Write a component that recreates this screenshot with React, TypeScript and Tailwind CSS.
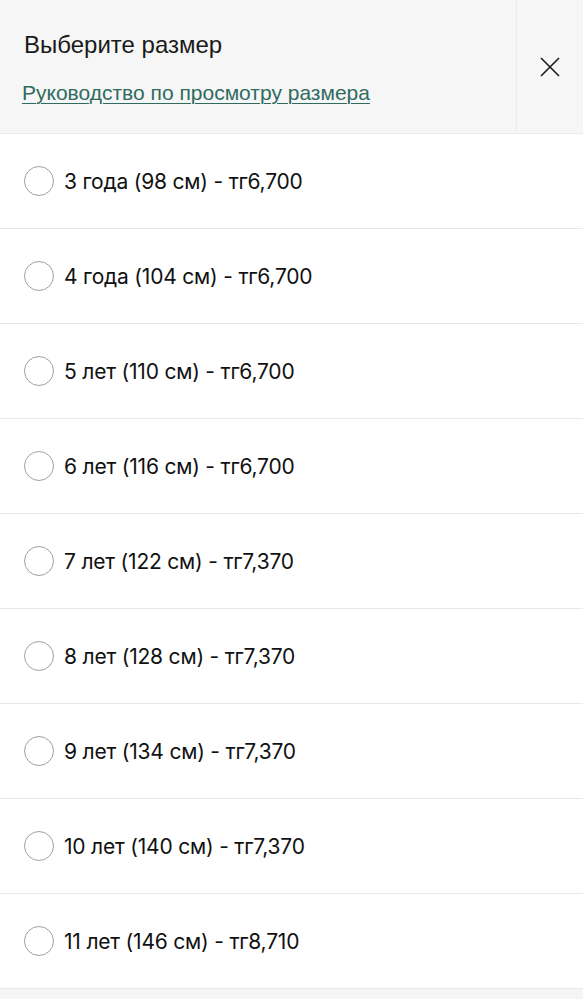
const sizes = [
  '3 года (98 см) - тг6,700',
  '4 года (104 см) - тг6,700',
  '5 лет (110 см) - тг6,700',
  '6 лет (116 см) - тг6,700',
  '7 лет (122 см) - тг7,370',
  '8 лет (128 см) - тг7,370',
  '9 лет (134 см) - тг7,370',
  '10 лет (140 см) - тг7,370',
  '11 лет (146 см) - тг8,710',
]

function SizeRow({ label }: { label: string }) {
  return (
    <label className="flex h-[95px] cursor-pointer items-center gap-[10px] border-b border-[#e8e8e8] pl-6">
      <span className="h-[30px] w-[30px] shrink-0 rounded-full border-[1.5px] border-[#a0a0a0] bg-white" />
      <span className="pt-[1px] text-[21px] tracking-[-0.2px] text-[#111]">{label}</span>
    </label>
  )
}

export default function App() {
  return (
    <div className="min-h-[999px] w-[583px] bg-[#f5f5f5] font-['Inter',sans-serif]">
      <div className="flex h-[134px] border-b border-[#ececec] bg-[#f6f6f6]">
        <div className="flex flex-1 flex-col pl-6 pt-[30px] font-['Liberation_Sans',Arial,sans-serif]">
          <h2 className="text-[24px] leading-[30px] text-[#1a1a1a]">Выберите размер</h2>
          <a
            href="#"
            className="mt-[20px] -ml-[2px] text-[21px] leading-[26px] text-[#2f6b60] underline decoration-1 underline-offset-[3px]">
            Руководство по просмотру размера
          </a>
        </div>
        <button className="flex w-[67px] items-center justify-center border-l border-[#ebebeb]">
          <svg width="22" height="22" viewBox="0 0 22 22" fill="none" stroke="#1a1a1a" strokeWidth="1.6">
            <path d="M2 2l18 18M20 2L2 20" />
          </svg>
        </button>
      </div>
      <div className="bg-white">
        {sizes.map((s) => (
          <SizeRow key={s} label={s} />
        ))}
      </div>
    </div>
  )
}
